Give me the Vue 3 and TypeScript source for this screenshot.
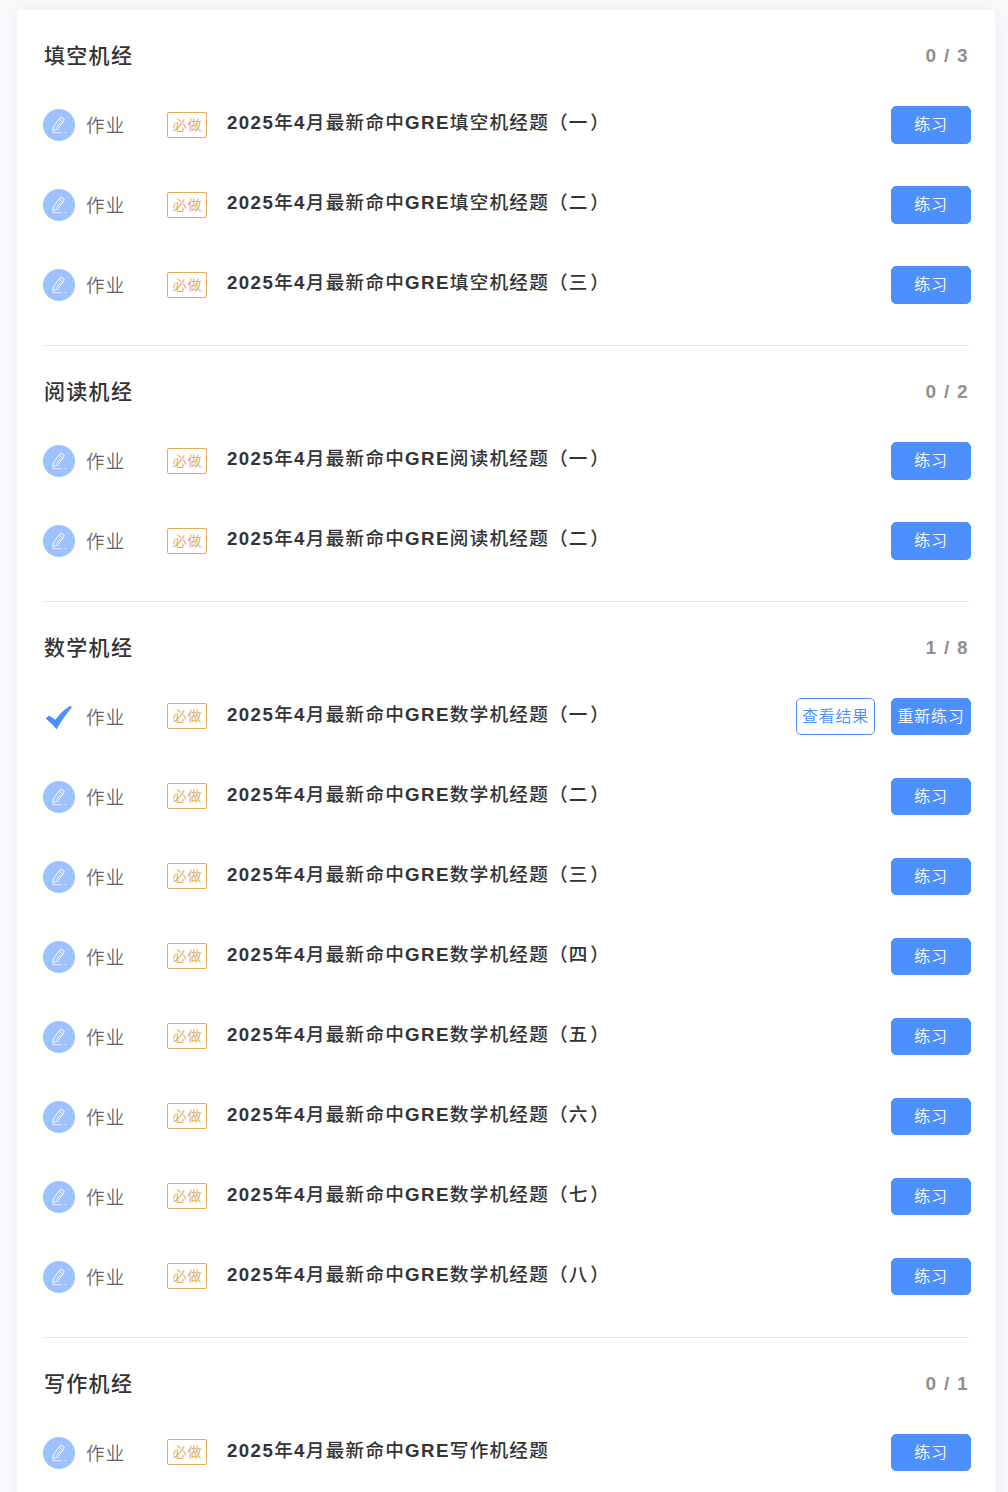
<script setup lang="ts">
interface Task {
  title: string
  done?: boolean
}

interface Section {
  name: string
  finished: number
  tasks: Task[]
}

const numerals = ['一', '二', '三', '四', '五', '六', '七', '八']

function makeTasks(name: string, count: number, finished = 0): Task[] {
  return numerals.slice(0, count).map((n, i) => ({
    title: `2025年4月最新命中GRE${name}题（${n}）`,
    done: i < finished,
  }))
}

const sections: Section[] = [
  { name: '填空机经', finished: 0, tasks: makeTasks('填空机经', 3) },
  { name: '阅读机经', finished: 0, tasks: makeTasks('阅读机经', 2) },
  { name: '数学机经', finished: 1, tasks: makeTasks('数学机经', 8, 1) },
  { name: '写作机经', finished: 0, tasks: [{ title: '2025年4月最新命中GRE写作机经题' }] },
]

// Latin runs are set bold, Chinese runs slightly lighter, the closing bracket sits a little apart
function runs(title: string): { text: string; kind: string }[] {
  return (title.match(/[0-9A-Z]+|）|[^0-9A-Z）]+/g) ?? []).map((text) => ({
    text,
    kind: /^[0-9A-Z]/.test(text) ? 'latin' : text === '）' ? 'han close' : 'han',
  }))
}
</script>

<template>
  <div class="page">
    <main class="card">
      <section v-for="section in sections" :key="section.name" class="section">
        <header class="head">
          <h2 class="name">{{ section.name }}</h2>
          <span class="count">{{ section.finished }} / {{ section.tasks.length }}</span>
        </header>
        <div v-for="task in section.tasks" :key="task.title" class="row">
          <svg v-if="task.done" class="icon" viewBox="0 0 32 32">
            <path d="M2.6 17.4 L6.2 14.4 L12.3 18.8 Q19 9.6 27.4 4.8 L28.9 6.2 Q20.5 16 13.6 28.2 Q9 22.4 2.6 17.4Z" fill="#4d8fff" />
          </svg>
          <svg v-else class="icon" viewBox="0 0 32 32">
            <circle cx="16" cy="16" r="16" fill="#9dc0ff" />
            <g fill="none" stroke="#fff" stroke-width="1" stroke-linejoin="round" stroke-linecap="round">
              <path d="M10.6 17.4 L17.2 8.8 Q18 8 19 8.7 L20.8 10.1 Q21.6 10.9 20.9 11.9 L14.3 20.3 L10.3 21.6Z" />
              <path d="M16.2 10.3 L19.7 13.1 M17.3 13.5 L13.2 18.7" stroke-width=".8" />
              <path d="M9.3 23.7 H18 M21.8 23.7 H22.8" stroke-width=".8" />
            </g>
          </svg>
          <span class="kind">作业</span>
          <span class="tag">必做</span>
          <span class="title"><span v-for="(run, i) in runs(task.title)" :key="i" :class="run.kind">{{ run.text }}</span></span>
          <div class="actions">
            <button v-if="task.done" class="btn outline">查看结果</button>
            <button class="btn">{{ task.done ? '重新练习' : '练习' }}</button>
          </div>
        </div>
      </section>
    </main>
  </div>
</template>

<style>
body {
  margin: 0;
  background: #f9fafc;
}
</style>

<style scoped>
.page {
  box-sizing: border-box;
  height: 1492px;
  padding: 10px 13px 0 17px;
  overflow: hidden;
  background: #f9fafc;
  font-family: "Liberation Sans", "Noto Sans CJK SC", sans-serif;
}

.card {
  box-sizing: border-box;
  height: 1600px;
  padding: 0 24px 0 26px;
  background: #fff;
  box-shadow: 0 0 18px rgba(40, 60, 100, 0.08);
}

.section {
  padding: 17px 0 20px;
  border-bottom: 1px solid #e8e8e8;
  margin-right: 2px;
}

.head {
  display: flex;
  align-items: center;
  justify-content: space-between;
  height: 58px;
}

.name {
  margin: 0 0 0 1px;
  color: #333;
  font-size: 21px;
  font-weight: 500;
  line-height: 30px;
  letter-spacing: 1.3px;
}

.count {
  color: #909090;
  font-size: 19px;
  font-weight: 700;
  letter-spacing: 1.3px;
}

.row {
  display: flex;
  align-items: center;
  height: 80px;
  margin-right: -2px;
}

.icon {
  width: 32px;
  height: 32px;
  flex: none;
}

.kind {
  width: 81px;
  margin: 1px 0 0 11px;
  color: #666;
  font-size: 18.5px;
  font-weight: 350;
  line-height: 29px;
  letter-spacing: 1.3px;
}

.tag {
  box-sizing: border-box;
  width: 40px;
  height: 26px;
  padding-left: 1px;
  border: 1px solid #dfae5c;
  border-radius: 2px;
  color: #dfa555;
  font-size: 14px;
  font-weight: 350;
  line-height: 24px;
  text-align: center;
  letter-spacing: 1px;
}

.title {
  margin: 0 auto 5px 20px;
  color: #333;
  font-size: 18px;
  line-height: 26px;
  letter-spacing: 1.8px;
  white-space: nowrap;
}

.latin {
  font-size: 18.7px;
  font-weight: 700;
  letter-spacing: 1.4px;
}

.han {
  font-size: 18.6px;
  font-weight: 500;
  letter-spacing: 1.25px;
}

.close {
  margin-left: 1.5px;
}

.actions {
  display: flex;
  gap: 16px;
}

.btn {
  box-sizing: border-box;
  width: 80px;
  height: 38px;
  padding: 0;
  border: 1px solid #4d8fff;
  border-radius: 5px;
  background: #4d8fff;
  color: #fff;
  font-family: inherit;
  font-size: 16px;
  font-weight: 350;
  line-height: 34px;
  letter-spacing: 0.7px;
  white-space: nowrap;
}

.btn.outline {
  width: 79px;
  background: #fff;
  color: #4d8fff;
}

/* Buttons of the later sections are a pixel shorter */
.section:nth-child(n + 3) .btn {
  height: 37px;
  margin-bottom: 1px;
}

.section:nth-child(n + 3) .tag {
  margin-bottom: 2px;
}
</style>
